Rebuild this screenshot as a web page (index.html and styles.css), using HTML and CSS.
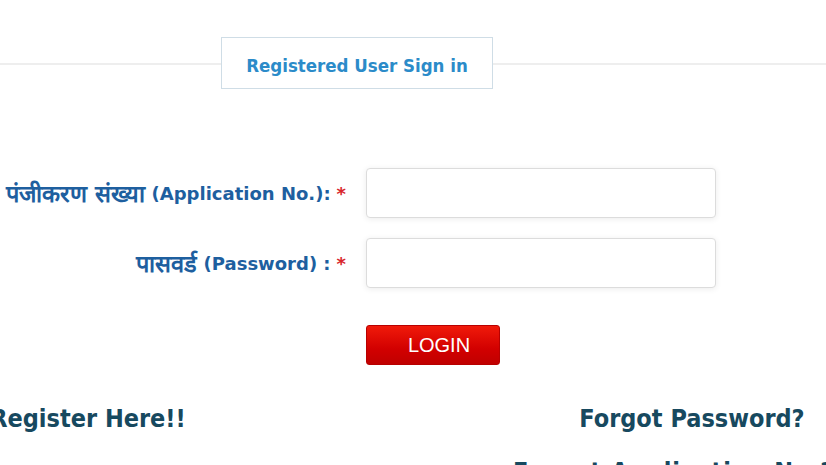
FILE: index.html
```html
<!DOCTYPE html>
<html lang="hi">
<head>
  <meta charset="UTF-8" />
  <meta name="viewport" content="width=device-width, initial-scale=1.0" />
  <title>Registered User Sign in</title>
  <link rel="stylesheet" href="styles.css">
</head>
<body>

  <div class="title-row">
    <div class="title-box">Registered User Sign in</div>
  </div>

  <form class="login-form" id="loginForm">
    <label class="form-label" for="appno"><span class="hi">पंजीकरण संख्या</span>&nbsp;(Application No.): <span class="req">*</span></label>
    <input class="form-input" type="text" id="appno" />

    <label class="form-label" for="pwd"><span class="hi">पासवर्ड</span>&nbsp;(Password) : <span class="req">*</span></label>
    <input class="form-input" type="password" id="pwd" />

    <div></div>
    <div class="btn-cell">
      <button class="login-btn" type="submit">LOGIN</button>
    </div>
  </form>

  <div class="links">
    <div class="link-col left">
      <a href="#">Register Here!!</a>
    </div>
    <div class="link-col right">
      <a href="#">Forgot Password?</a>
      <a class="wide" href="#">Forgot Application No.?</a>
    </div>
  </div>

</body>
</html>
```

FILE: styles.css
```css
* {
  margin: 0;
  padding: 0;
  box-sizing: border-box;
}

body {
  background: #ffffff;
  font-family: 'DejaVu Sans', Verdana, sans-serif;
  overflow: hidden;
}

.title-row {
  margin-top: 37px;
  padding-left: 221px;
  background: linear-gradient(#eeeeee, #eeeeee) 0 26px / 100% 2px no-repeat;
}

.title-box {
  width: 272px;
  height: 52px;
  padding-top: 4px;
  background: #ffffff;
  border: 1px solid #cfdde6;
  color: #2b8bc9;
  font-family: 'DejaVu Sans Condensed', 'DejaVu Sans', sans-serif;
  font-weight: bold;
  font-size: 18.5px;
  display: flex;
  align-items: center;
  justify-content: center;
}

.login-form {
  margin-top: 79px;
  display: grid;
  grid-template-columns: 346px 350px;
  column-gap: 20px;
  row-gap: 20px;
}

.form-label {
  display: flex;
  align-items: center;
  justify-content: flex-end;
  white-space: nowrap;
  color: #1e5f9f;
  font-weight: bold;
  font-size: 18px;
}

.form-label .hi {
  font-size: 23.5px;
}

.req {
  color: #d8262b;
  margin-left: 6px;
}

.form-input {
  height: 50px;
  border: 1px solid #dcdcdc;
  border-radius: 4px;
  background: #ffffff;
  box-shadow: 0 1px 6px rgba(0, 0, 0, 0.08);
  font-size: 16px;
  padding: 0 10px;
}

.btn-cell {
  padding-top: 17px;
}

.login-btn {
  width: 134px;
  height: 40px;
  padding-left: 12px;
  border: 1px solid #b80000;
  border-radius: 3px;
  background: linear-gradient(#f01a0a, #d20000 60%, #c00000);
  color: #ffffff;
  font-family: 'Liberation Sans', Arial, sans-serif;
  font-size: 20px;
  cursor: pointer;
}

.links {
  margin-top: 39px;
  display: grid;
  grid-template-columns: 176px 382px 268px;
}

.link-col {
  display: flex;
  flex-direction: column;
  align-items: center;
  gap: 24px;
}

.link-col.right {
  grid-column: 3;
}

.link-col a {
  color: #17495f;
  font-family: 'DejaVu Sans Condensed', 'DejaVu Sans', sans-serif;
  font-weight: bold;
  font-size: 25px;
  text-decoration: none;
  white-space: nowrap;
}

.link-col a.wide {
  align-self: flex-start;
  margin-left: -45px;
  letter-spacing: 1px;
}
```
